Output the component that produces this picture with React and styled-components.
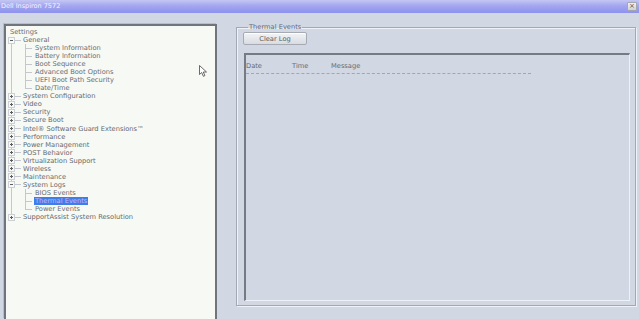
import React from 'react';
import styled, { createGlobalStyle } from 'styled-components';

const tree = [
  {
    label: 'General',
    open: true,
    children: [
      'System Information',
      'Battery Information',
      'Boot Sequence',
      'Advanced Boot Options',
      'UEFI Boot Path Security',
      'Date/Time',
    ],
  },
  { label: 'System Configuration' },
  { label: 'Video' },
  { label: 'Security' },
  { label: 'Secure Boot' },
  { label: 'Intel® Software Guard Extensions™' },
  { label: 'Performance' },
  { label: 'Power Management' },
  { label: 'POST Behavior' },
  { label: 'Virtualization Support' },
  { label: 'Wireless' },
  { label: 'Maintenance' },
  {
    label: 'System Logs',
    open: true,
    children: ['BIOS Events', 'Thermal Events', 'Power Events'],
  },
  { label: 'SupportAssist System Resolution' },
];

const selected = 'Thermal Events';

const App = () => (
  <Screen>
    <GlobalStyle />
    <TitleBar>
      <TitleText>Dell Inspiron 7572</TitleText>
      <CloseButton>×</CloseButton>
    </TitleBar>
    <Body>
      <TreePanel>
        <RootLabel>Settings</RootLabel>
        <TreeBody>
          {tree.map((node) => (
            <React.Fragment key={node.label}>
              <Row>
                <Expander $open={node.open} />
                <Branch />
                <Label>{node.label}</Label>
              </Row>
              {node.children &&
                node.children.map((child, i) => (
                  <Row key={child}>
                    <Tick $last={i === node.children.length - 1} />
                    <ChildLabel $selected={child === selected}>{child}</ChildLabel>
                  </Row>
                ))}
            </React.Fragment>
          ))}
        </TreeBody>
        <Cursor viewBox="0 0 9 12">
          <path d="M0.5 0.5 L0.5 9.5 L2.7 7.5 L4.4 11.3 L5.9 10.6 L4.3 7 L7.5 7 Z" fill="#fff" stroke="#444" strokeWidth="0.8" strokeLinejoin="round" />
        </Cursor>
      </TreePanel>
      <Content>
        <GroupBox>
          <Legend>Thermal Events</Legend>
          <Button>Clear Log</Button>
          <LogList>
            <LogHeader>
              <Column $width={46}>Date</Column>
              <Column $width={39}>Time</Column>
              <Column>Message</Column>
            </LogHeader>
          </LogList>
        </GroupBox>
      </Content>
    </Body>
  </Screen>
);

const GlobalStyle = createGlobalStyle`
  html, body {
    margin: 0;
    background: #d1d8e4;
  }
  body {
    font-family: "DejaVu Sans", Verdana, sans-serif;
  }
`;

const Screen = styled('div')`
  width: 639px;
  height: 319px;
  display: flex;
  flex-direction: column;
  overflow: hidden;
  background: #d1d8e4;
`;

const TitleBar = styled('div')`
  height: 13px;
  flex: none;
  display: flex;
  align-items: center;
  justify-content: space-between;
  padding: 0 2px 1px 1px;
  background: linear-gradient(180deg, #c4c7f3 0%, #a3a6f0 45%, #8e92ee 100%);
  box-sizing: border-box;
`;

const TitleText = styled('span')`
  font-size: 6.5px;
  color: #f4f4ff;
`;

const CloseButton = styled('span')`
  width: 10px;
  height: 9px;
  box-sizing: border-box;
  display: flex;
  align-items: center;
  justify-content: center;
  font-size: 7px;
  line-height: 1;
  color: #555;
  background: linear-gradient(#f2f2f4, #cfd1d6);
  border: 1px solid #a4a7ae;
  border-radius: 1px;
`;

const Body = styled('div')`
  flex: 1;
  display: flex;
  gap: 19px;
  padding: 11px 3px 0 4px;
  min-height: 0;
`;

const TreePanel = styled('div')`
  position: relative;
  width: 213px;
  flex: none;
  box-sizing: border-box;
  background: #f7f9f4;
  border: 2px solid #70757d;
  border-bottom: none;
  box-shadow: -1px -1px 0 #b8bdc6;
  padding-top: 2px;
  font-size: 6.7px;
  color: #66696e;
`;

const RootLabel = styled('div')`
  height: 8px;
  line-height: 8px;
  padding-left: 4px;
`;

const TreeBody = styled('div')`
  background-image: linear-gradient(#c4c7cc, #c4c7cc);
  background-repeat: no-repeat;
  background-size: 1px calc(100% - 8px);
  background-position: 5px 4px;
`;

const Row = styled('div')`
  display: flex;
  align-items: center;
  height: 8.05px;
  white-space: nowrap;
`;

const Expander = styled('span')`
  position: relative;
  width: 7px;
  height: 7px;
  margin-left: 2px;
  box-sizing: border-box;
  border: 1px solid #ccd0d4;
  background: #f7f9f4;
  &::before {
    content: '';
    position: absolute;
    left: 1px;
    top: 2px;
    width: 3px;
    height: 1px;
    background: #5a5d62;
  }
  &::after {
    content: '';
    display: ${(p) => (p.$open ? 'none' : 'block')};
    position: absolute;
    left: 2px;
    top: 1px;
    width: 1px;
    height: 3px;
    background: #5a5d62;
  }
`;

const Branch = styled('span')`
  width: 6px;
  height: 1px;
  margin-right: 2px;
  background: #c4c7cc;
`;

const Label = styled('span')`
  line-height: 8px;
`;

const Tick = styled('span')`
  width: 7px;
  height: 8px;
  margin-left: 19px;
  background:
    linear-gradient(#c4c7cc, #c4c7cc) 0 0 / 1px ${(p) => (p.$last ? '5px' : '8px')} no-repeat,
    linear-gradient(#c4c7cc, #c4c7cc) 0 4px / 7px 1px no-repeat;
`;

const ChildLabel = styled('span')`
  margin-left: 2px;
  padding: 0 1px;
  line-height: 8px;
  color: ${(p) => (p.$selected ? '#c9b4ff' : '#6a6d72')};
  background: ${(p) => (p.$selected ? '#3f7ee8' : 'transparent')};
`;

const Cursor = styled('svg')`
  position: absolute;
  left: 193px;
  top: 39px;
  width: 9px;
  height: 12px;
`;

const Content = styled('div')`
  flex: 1;
  display: flex;
  flex-direction: column;
  padding: 0 0 13px 0;
  min-width: 0;
`;

const GroupBox = styled('fieldset')`
  flex: 1;
  margin: 0;
  padding: 0 5px 4px 6px;
  border: 1px solid #a3a9b3;
  box-shadow: inset 1px 1px 0 #eef1f6, 1px 1px 0 #eef1f6;
  display: flex;
  flex-direction: column;
  min-width: 0;
`;

const Legend = styled('legend')`
  font-size: 6.7px;
  color: #66696e;
  padding: 0 1px;
  margin-left: 5px;
  line-height: 7px;
`;

const Button = styled('button')`
  align-self: flex-start;
  width: 64px;
  height: 13px;
  margin: 1px 0 0 0;
  padding: 0;
  font-family: inherit;
  font-size: 6.7px;
  color: #5a5d62;
  border: 1px solid #a6abb3;
  border-radius: 2px;
  background: linear-gradient(#f3f4f6, #d8dbe0);
  box-shadow: inset 0 1px 0 #fff;
`;

const LogList = styled('div')`
  flex: 1;
  margin-top: 8px;
  margin-left: 1px;
  border-top: 2px solid #767b83;
  border-left: 2px solid #767b83;
  border-right: 1px solid #eef1f6;
  border-bottom: 1px solid #eef1f6;
  padding: 7px 0 0 0;
`;

const LogHeader = styled('div')`
  width: 285px;
  display: flex;
  font-size: 6.7px;
  color: #66696e;
  line-height: 8px;
  padding-bottom: 3px;
  border-bottom: 1px dashed #a2a6ad;
`;

const Column = styled('span')`
  width: ${(p) => (p.$width ? `${p.$width}px` : 'auto')};
  flex: none;
`;

export default App;
